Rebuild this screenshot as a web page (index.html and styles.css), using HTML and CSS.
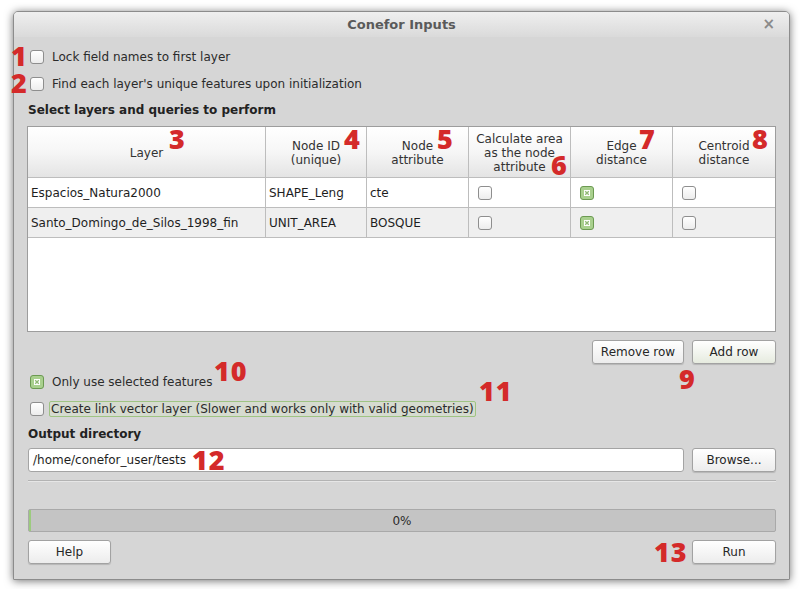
FILE: index.html
```html
<!DOCTYPE html>
<html>
<head>
<meta charset="utf-8">
<title>Conefor Inputs</title>
<link rel="stylesheet" href="styles.css">
</head>
<body>
<div class="page">
  <div class="window">
    <div class="titlebar">
      <span class="title">Conefor Inputs</span>
      <span class="close">×</span>
    </div>
    <div class="content">
      <div class="check-row first"><span class="cb"></span><span>Lock field names to first layer</span></div>
      <div class="check-row"><span class="cb"></span><span>Find each layer's unique features upon initialization</span></div>
      <div class="section">Select layers and queries to perform</div>

      <div class="table">
        <div class="trow head">
          <div class="cell c1">Layer</div>
          <div class="cell c2">Node ID<br>(unique)</div>
          <div class="cell c3">Node<br>attribute</div>
          <div class="cell c4">Calculate area<br>as the node<br>attribute</div>
          <div class="cell c5">Edge<br>distance</div>
          <div class="cell c6">Centroid<br>distance</div>
        </div>
        <div class="trow data">
          <div class="cell c1">Espacios_Natura2000</div>
          <div class="cell c2">SHAPE_Leng</div>
          <div class="cell c3">cte</div>
          <div class="cell c4"><span class="cb"></span></div>
          <div class="cell c5"><span class="cb on"><svg viewBox="0 0 14 14" width="14" height="14"><rect x="4" y="4" width="6" height="6" fill="#fff"/><path d="M5.2 5.2 L8.8 8.8 M8.8 5.2 L5.2 8.8" stroke="#8fb873" stroke-width="1.3"/></svg></span></div>
          <div class="cell c6"><span class="cb"></span></div>
        </div>
        <div class="trow data alt">
          <div class="cell c1">Santo_Domingo_de_Silos_1998_fin</div>
          <div class="cell c2">UNIT_AREA</div>
          <div class="cell c3">BOSQUE</div>
          <div class="cell c4"><span class="cb"></span></div>
          <div class="cell c5"><span class="cb on"><svg viewBox="0 0 14 14" width="14" height="14"><rect x="4" y="4" width="6" height="6" fill="#fff"/><path d="M5.2 5.2 L8.8 8.8 M8.8 5.2 L5.2 8.8" stroke="#8fb873" stroke-width="1.3"/></svg></span></div>
          <div class="cell c6"><span class="cb"></span></div>
        </div>
      </div>

      <div class="btn-row">
        <button class="btn remove">Remove row</button>
        <button class="btn add">Add row</button>
      </div>

      <div class="check-row opt1"><span class="cb on"><svg viewBox="0 0 14 14" width="14" height="14"><rect x="4" y="4" width="6" height="6" fill="#fff"/><path d="M5.2 5.2 L8.8 8.8 M8.8 5.2 L5.2 8.8" stroke="#8fb873" stroke-width="1.3"/></svg></span><span>Only use selected features</span></div>
      <div class="check-row opt2"><span class="cb"></span><span class="focus">Create link vector layer (Slower and works only with valid geometries)</span></div>

      <div class="section out">Output directory</div>
      <div class="dir-row">
        <div class="input">/home/conefor_user/tests</div>
        <button class="btn browse">Browse...</button>
      </div>
      <div class="separator"></div>

      <div class="progress"><span class="bar"></span><span class="pct">0%</span></div>

      <div class="footer">
        <button class="btn help">Help</button>
        <button class="btn run">Run</button>
      </div>
    </div>
  </div>

  <span class="ann a1">1</span>
  <span class="ann a2">2</span>
  <span class="ann a3">3</span>
  <span class="ann a4">4</span>
  <span class="ann a5">5</span>
  <span class="ann a6">6</span>
  <span class="ann a7">7</span>
  <span class="ann a8">8</span>
  <span class="ann a9">9</span>
  <span class="ann a10">10</span>
  <span class="ann a11">11</span>
  <span class="ann a12">12</span>
  <span class="ann a13">13</span>
</div>
</body>
</html>
```

FILE: styles.css
```css
* { box-sizing: border-box; }

html, body {
  margin: 0;
  padding: 0;
  background: #ffffff;
}

body {
  font-family: "DejaVu Sans", "Liberation Sans", sans-serif;
  font-size: 12px;
  color: #2b2b2b;
}

.page {
  position: relative;
  width: 804px;
  height: 589px;
  padding: 11px 0 0 13px;
}

.window {
  width: 777px;
  height: 569px;
  background: #d6d6d6;
  border: 1px solid #8c8c8c;
  border-radius: 5px 5px 1px 1px;
  box-shadow: 0 1px 9px rgba(0, 0, 0, 0.55);
  display: flex;
  flex-direction: column;
}

.titlebar {
  position: relative;
  height: 25px;
  background: linear-gradient(#efefef, #dadada);
  border-radius: 4px 4px 0 0;
  display: flex;
  align-items: center;
  justify-content: center;
  padding-bottom: 1px;
}

.title {
  font-weight: bold;
  font-size: 13px;
  color: #5a5a5a;
}

.close {
  position: absolute;
  right: 14px;
  top: 3px;
  font-size: 15px;
  color: #8a8a8a;
  font-weight: bold;
}

.content {
  padding: 6px 13px 0 13px;
  display: flex;
  flex-direction: column;
}

.check-row {
  height: 27px;
  display: flex;
  align-items: center;
  padding-left: 3px;
  gap: 8px;
}

.cb {
  display: inline-block;
  width: 14px;
  height: 14px;
  border: 1px solid #8e8e8e;
  border-radius: 3px;
  background: linear-gradient(#ffffff, #ededed);
  flex: none;
  position: relative;
}

.cb.on {
  border-color: #6c9a52;
  background: #a9d08e;
}

.cb.on svg {
  position: absolute;
  left: -1px;
  top: -1px;
}

.section {
  height: 26px;
  display: flex;
  align-items: center;
  font-weight: bold;
  color: #222;
  padding-left: 1px;
}

.table {
  margin-top: 3px;
  height: 206px;
  background: #ffffff;
  border: 1px solid #9d9d9d;
}

.trow {
  display: grid;
  grid-template-columns: 238px 101px 102px 102px 102px 102px;
  border-bottom: 1px solid #bdbdbd;
}

.cell {
  border-right: 1px solid #bdbdbd;
}

.cell.c6 { border-right: none; }

.head .cell {
  height: 50px;
  background: linear-gradient(#ffffff 0%, #f6f6f6 50%, #e4e4e4 100%);
  display: flex;
  align-items: center;
  justify-content: center;
  text-align: center;
  line-height: 14px;
  padding-top: 2px;
  color: #333;
}

.data .cell {
  height: 29px;
  display: flex;
  align-items: center;
  padding-left: 3px;
  color: #1e1e1e;
}

.data .cell.c4,
.data .cell.c5,
.data .cell.c6 {
  padding-left: 9px;
}

.data.alt { background: #efefef; }

.btn-row {
  margin-top: 8px;
  display: flex;
  justify-content: flex-end;
  gap: 8px;
}

.btn {
  height: 24px;
  font-family: "DejaVu Sans", "Liberation Sans", sans-serif;
  font-size: 12px;
  color: #262626;
  border: 1px solid #a2a2a2;
  border-radius: 3px;
  background: linear-gradient(#ffffff, #ececec);
  box-shadow: 0 1px 1px rgba(0, 0, 0, 0.15);
  padding: 0;
}

.btn.remove { width: 92px; }
.btn.add { width: 84px; background: linear-gradient(#ffffff, #e6ebdf); }
.btn.browse { width: 84px; }
.btn.help { width: 83px; }
.btn.run { width: 84px; }

.check-row.opt1 { margin-top: 4px; height: 27px; }
.check-row.opt2 { height: 27px; }

.focus {
  border: 1px solid #9fc483;
  border-radius: 2px;
  background: #d6dbd0;
  padding: 0 1px;
  line-height: 14px;
  margin-left: -3px;
}

.section.out {
  height: 24px;
}

.dir-row {
  margin-top: 2px;
  display: flex;
  gap: 8px;
}

.input {
  margin-left: 1px;
  width: 656px;
  height: 24px;
  background: #ffffff;
  border: 1px solid #a4a4a4;
  border-radius: 3px;
  display: flex;
  align-items: center;
  padding-left: 4px;
  color: #1e1e1e;
}

.separator {
  margin: 8px 0 0 1px;
  height: 2px;
  border-top: 1px solid #b3b3b3;
  border-bottom: 1px solid #e6e6e6;
}

.progress {
  margin: 27px 0 0 1px;
  height: 23px;
  border: 1px solid #a9a9a9;
  border-radius: 2px;
  background: #c4c4c4;
  display: flex;
  align-items: center;
  justify-content: center;
  position: relative;
  color: #2b2b2b;
}

.progress .bar {
  position: absolute;
  left: 0;
  top: 0;
  bottom: 0;
  width: 2px;
  background: #9ccb7e;
}

.footer {
  margin: 8px 0 0 1px;
  display: flex;
  justify-content: space-between;
}

.ann {
  position: absolute;
  font-family: "Open Sans", "DejaVu Sans", sans-serif;
  font-weight: 800;
  font-size: 27px;
  line-height: 21px;
  letter-spacing: 1px;
  color: #d42a2a;
}

.a1 { left: 11px; top: 45px; }
.a2 { left: 11px; top: 72px; }
.a3 { left: 169px; top: 128px; }
.a4 { left: 344px; top: 128px; }
.a5 { left: 437px; top: 128px; }
.a6 { left: 551px; top: 154px; }
.a7 { left: 639px; top: 128px; }
.a8 { left: 752px; top: 128px; }
.a9 { left: 679px; top: 368px; }
.a10 { left: 214px; top: 360px; }
.a11 { left: 479px; top: 380px; }
.a12 { left: 192px; top: 449px; }
.a13 { left: 654px; top: 541px; }
```
